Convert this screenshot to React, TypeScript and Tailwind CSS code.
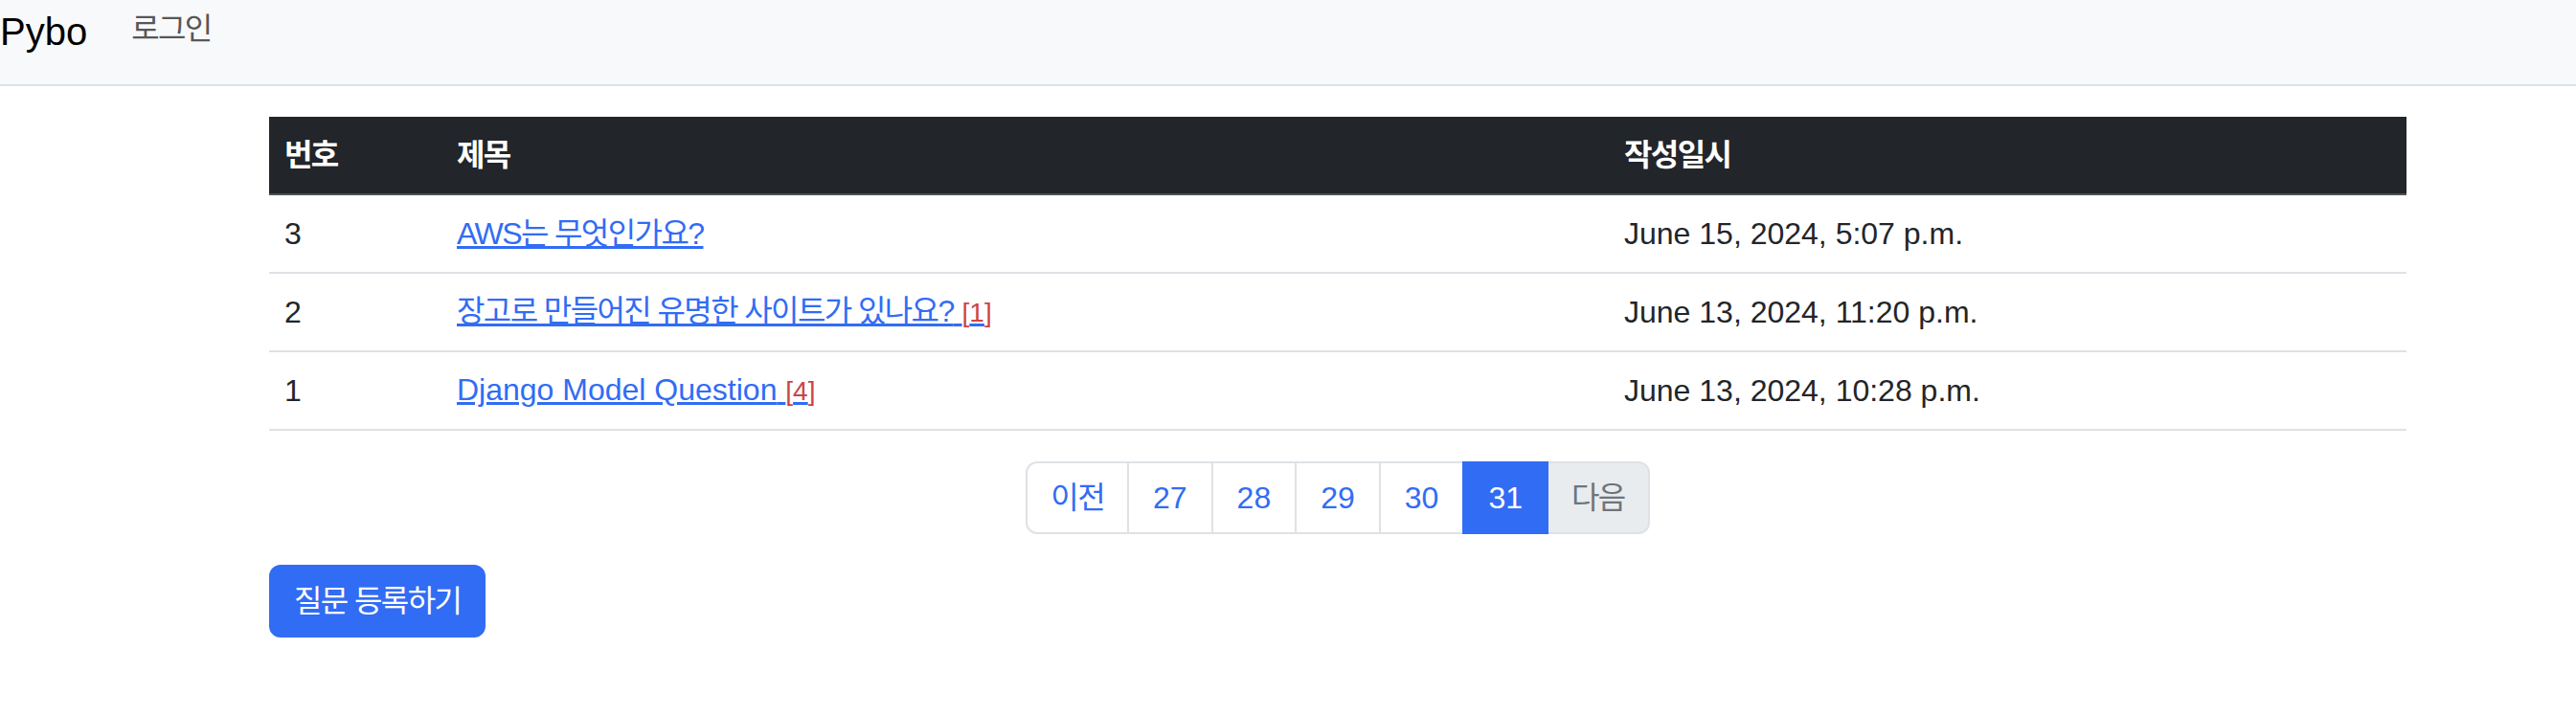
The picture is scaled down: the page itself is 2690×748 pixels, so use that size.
import React from "react";

const K = ({ children }: { children: React.ReactNode }) => (
  <span className="tracking-[-0.05em]">{children}</span>
);

const rows = [
  { n: "3", title: "AWS는 무엇인가요?", count: null as number | null, date: "June 15, 2024, 5:07 p.m." },
  { n: "2", title: "장고로 만들어진 유명한 사이트가 있나요?", count: 1, date: "June 13, 2024, 11:20 p.m." },
  { n: "1", title: "Django Model Question", count: 4, date: "June 13, 2024, 10:28 p.m.", latin: true },
];

export default function App() {
  return (
    <div className="min-h-screen w-[2690px] bg-white font-['Liberation_Sans','Noto_Sans_CJK_KR',sans-serif] text-[32px] leading-[48px] text-[#222529]">
      <nav className="flex h-[90px] items-start border-b-2 border-[#dee2e6] bg-[#f8f9fa]">
        <span className="mt-[3px] text-[40px] leading-[60px] text-[#000]">Pybo</span>
        <span className="ml-[46px] mt-[6px] text-[32px] leading-[48px] text-[#575757]">
          <K>로그인</K>
        </span>
      </nav>

      <div className="ml-[281px] w-[2232px] pt-[32px]">
        <div className="grid h-[82px] grid-cols-[180px_1219px_833px] items-center border-b-2 border-[#4d5154] bg-[#222529] font-bold text-white">
          <div className="px-[16px]"><K>번호</K></div>
          <div className="px-[16px]"><K>제목</K></div>
          <div className="px-[16px]"><K>작성일시</K></div>
        </div>
        {rows.map((r) => (
          <div
            key={r.n}
            className="grid h-[82px] grid-cols-[180px_1219px_833px] items-center border-b-2 border-[#dee2e6]"
          >
            <div className="px-[16px]">{r.n}</div>
            <div className="px-[16px]">
              <a href="#" className="text-[#316cf4] underline">
                {r.latin ? r.title : <K>{r.title}</K>}
                {r.count !== null && (
                  <>
                    {" "}
                    <span className="text-[28px] text-[#cb444a]">[{r.count}]</span>
                  </>
                )}
              </a>
            </div>
            <div className="px-[16px]">{r.date}</div>
          </div>
        ))}

        <div className="mt-[32px] flex justify-center">
          <div className="flex">
            <span className="rounded-l-[12px] border-2 border-[#dee2e6] bg-white px-[24px] py-[12px] text-[#316cf4]">
              <K>이전</K>
            </span>
            {["27", "28", "29", "30"].map((p) => (
              <span
                key={p}
                className="-ml-[2px] border-2 border-[#dee2e6] bg-white px-[25px] py-[12px] text-[#316cf4]"
              >
                {p}
              </span>
            ))}
            <span className="relative z-10 -ml-[2px] border-2 border-[#316cf4] bg-[#316cf4] px-[25px] py-[12px] text-white">
              31
            </span>
            <span className="-ml-[2px] rounded-r-[12px] border-2 border-[#dee2e6] bg-[#e9ecef] px-[24px] py-[12px] text-[#6d757c]">
              <K>다음</K>
            </span>
          </div>
        </div>

        <div className="mt-[32px]">
          <button className="h-[76px] rounded-[12px] border-2 border-[#316cf4] bg-[#316cf4] px-[24px] text-[32px] leading-[48px] text-white">
            <K>질문 등록하기</K>
          </button>
        </div>
      </div>
    </div>
  );
}
